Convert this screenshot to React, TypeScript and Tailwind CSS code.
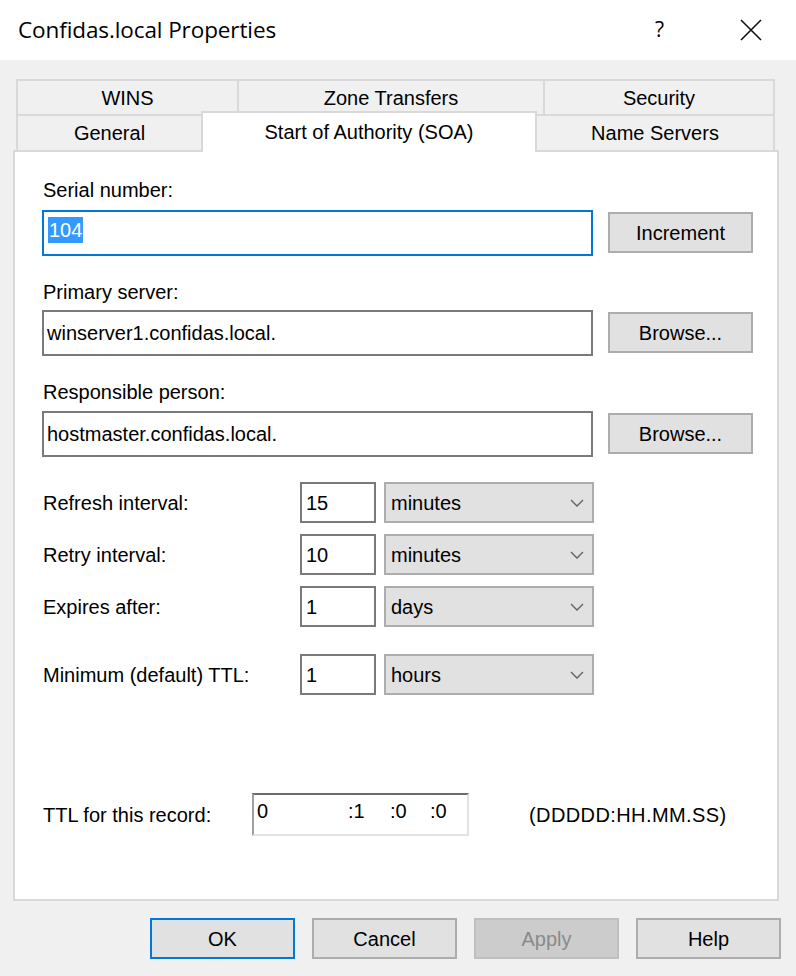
import React from 'react'

const font = "font-['Liberation_Sans',Arial,sans-serif]"

function Chevron() {
    return (
        <svg width="14" height="8" viewBox="0 0 14 8" className="shrink-0">
            <path d="M1 1 L7 7 L13 1" fill="none" stroke="#5f5f5f" strokeWidth="1.3" />
        </svg>
    )
}

function TextBox({ value, className = '' }: { value: string; className?: string }) {
    return (
        <div className={`h-[46px] border-2 border-[#7a7a7a] bg-white pl-[3px] flex items-center text-[20px] leading-none ${className}`}>
            {value}
        </div>
    )
}

function SideButton({ label, className = '' }: { label: string; className?: string }) {
    return (
        <div className={`w-[145px] h-[41px] mt-[2px] border-2 border-[#adadad] bg-[#e1e1e1] flex items-center justify-center text-[20px] ${className}`}>
            {label}
        </div>
    )
}

function IntervalRow({ label, value, unit, className = '' }: { label: string; value: string; unit: string; className?: string }) {
    return (
        <div className={`flex items-center h-[41px] ${className}`}>
            <div className="w-[258px] pl-[1px] text-[20px]">{label}</div>
            <div className="w-[76px] h-[41px] border-2 border-[#7a7a7a] bg-white pl-[4px] flex items-center text-[20px] leading-none">
                {value}
            </div>
            <div className="ml-[8px] w-[210px] h-[41px] border-2 border-[#adadad] bg-[#e1e1e1] pl-[5px] pr-[8px] flex items-center justify-between text-[20px] leading-none">
                <span>{unit}</span>
                <Chevron />
            </div>
        </div>
    )
}

function DialogButton({ label, variant = 'normal' }: { label: string; variant?: 'normal' | 'default' | 'disabled' }) {
    const styles = {
        normal: 'border-[#adadad] bg-[#e1e1e1] text-black',
        default: 'border-[#0078d7] bg-[#e1e1e1] text-black',
        disabled: 'border-[#bfbfbf] bg-[#cccccc] text-[#8a8a8a]',
    }
    return (
        <div className={`w-[145px] h-[41px] border-2 flex items-center justify-center text-[20px] ${styles[variant]}`}>
            {label}
        </div>
    )
}

export default function App() {
    return (
        <div className={`w-[796px] h-[976px] bg-[#f0f0f0] flex flex-col text-black ${font}`}>

            {/* Title bar */}
            <div className="h-[60px] bg-white flex items-center pl-[18px] pr-[34px]">
                <span className="font-['Open_Sans',sans-serif] text-[22.5px] tracking-[-0.1px]">Confidas.local Properties</span>
                <span className="ml-auto mr-[76px] font-['Open_Sans',sans-serif] text-[21px]">?</span>
                <svg width="22" height="22" viewBox="0 0 22 22">
                    <path d="M1 1 L21 21 M21 1 L1 21" stroke="#111" strokeWidth="1.6" />
                </svg>
            </div>

            {/* Tabs */}
            <div className="mt-[19px] pl-[16px] flex flex-col text-[20px]">
                <div className="flex h-[35px]">
                    <div className="w-[221px] border-t-2 border-l-2 border-[#d9d9d9] flex items-center justify-center">WINS</div>
                    <div className="w-[306px] border-t-2 border-l-2 border-[#d9d9d9] flex items-center justify-center">Zone Transfers</div>
                    <div className="w-[232px] border-t-2 border-l-2 border-r-2 border-[#d9d9d9] flex items-center justify-center">Security</div>
                </div>
                <div className="flex h-[36px] items-end">
                    <div className="w-[185px] h-[36px] border-t-2 border-l-2 border-[#d9d9d9] flex items-center justify-center">General</div>
                    <div className="relative z-10 w-[336px] h-[41px] -mb-[2px] bg-white border-t-2 border-l-2 border-r-2 border-[#d9d9d9] flex items-start justify-center pt-[4px]">
                        Start of Authority (SOA)
                    </div>
                    <div className="w-[238px] h-[36px] border-t-2 border-r-2 border-[#d9d9d9] flex items-center justify-center">Name Servers</div>
                </div>
            </div>

            {/* Panel */}
            <div className="ml-[13px] w-[766px] h-[751px] bg-white border-2 border-[#d9d9d9] pl-[27px] flex flex-col text-[20px]">
                <div className="mt-[26px] h-[24px] leading-[24px] pl-[1px]">Serial number:</div>
                <div className="mt-[8px] flex items-start gap-[15px]">
                    <div className="w-[551px] h-[46px] border-2 border-[#0078d7] bg-white pl-[4px] pt-[5px] flex items-start text-[20px] leading-none">
                        <span className="bg-[#3399ff] text-white px-[1px] py-[3px]">104</span>
                    </div>
                    <SideButton label="Increment" />
                </div>

                <div className="mt-[24px] h-[24px] leading-[24px] pl-[1px]">Primary server:</div>
                <div className="mt-[6px] flex items-start gap-[15px]">
                    <TextBox value="winserver1.confidas.local." className="w-[551px]" />
                    <SideButton label="Browse..." />
                </div>

                <div className="mt-[24px] h-[24px] leading-[24px] pl-[1px]">Responsible person:</div>
                <div className="mt-[7px] flex items-start gap-[15px]">
                    <TextBox value="hostmaster.confidas.local." className="w-[551px]" />
                    <SideButton label="Browse..." />
                </div>

                <IntervalRow label="Refresh interval:" value="15" unit="minutes" className="mt-[25px]" />
                <IntervalRow label="Retry interval:" value="10" unit="minutes" className="mt-[11px]" />
                <IntervalRow label="Expires after:" value="1" unit="days" className="mt-[11px]" />
                <IntervalRow label="Minimum (default) TTL:" value="1" unit="hours" className="mt-[27px]" />

                {/* TTL for this record */}
                <div className="mt-[98px] flex items-center h-[43px]">
                    <div className="w-[210px] pl-[1px]">TTL for this record:</div>
                    <div className="w-[217px] h-[43px] bg-white border-2 border-t-[#6d6d6d] border-l-[#a0a0a0] border-r-[#e3e3e3] border-b-[#e3e3e3] pl-[3px] pt-[6px] flex items-start text-[20px] leading-none">
                        <span className="w-[91px]">0</span>
                        <span className="w-[42px]">:1</span>
                        <span className="w-[40px]">:0</span>
                        <span>:0</span>
                    </div>
                    <div className="ml-[60px] tracking-[0.4px]">(DDDDD:HH.MM.SS)</div>
                </div>
            </div>

            {/* Dialog buttons */}
            <div className="mt-[17px] flex justify-end gap-[17px] pr-[15px]">
                <DialogButton label="OK" variant="default" />
                <DialogButton label="Cancel" />
                <DialogButton label="Apply" variant="disabled" />
                <DialogButton label="Help" />
            </div>
        </div>
    )
}
